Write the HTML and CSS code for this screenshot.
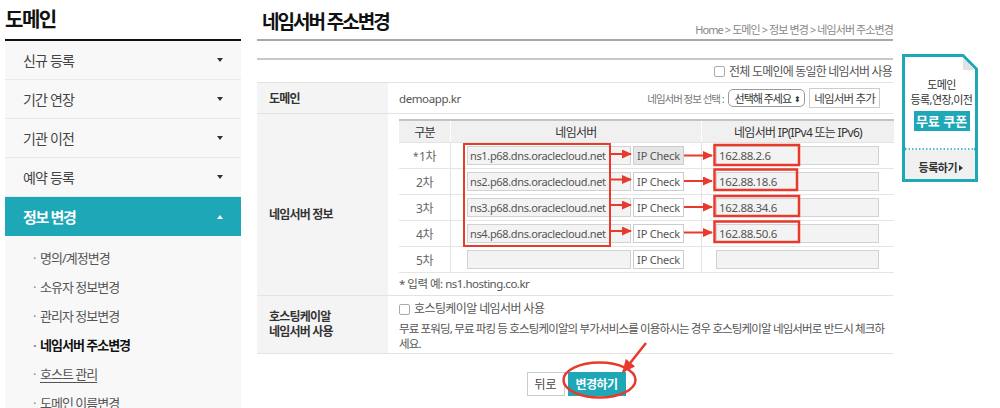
FILE: index.html
```html
<!DOCTYPE html>
<html lang="ko">
<head>
<meta charset="utf-8">
<title>네임서버 주소변경</title>
<link rel="stylesheet" href="styles.css">
</head>
<body>
<div class="page">
  <aside class="side">
    <h2 class="side-title">도메인</h2>
    <ul class="menu">
      <li class="menu-item"><span>신규 등록</span><i class="caret"></i></li>
      <li class="menu-item"><span>기간 연장</span><i class="caret"></i></li>
      <li class="menu-item"><span>기관 이전</span><i class="caret"></i></li>
      <li class="menu-item"><span>예약 등록</span><i class="caret"></i></li>
      <li class="menu-item active"><span>정보 변경</span><i class="caret up"></i></li>
    </ul>
    <ul class="sub">
      <li>명의/계정변경</li>
      <li>소유자 정보변경</li>
      <li>관리자 정보변경</li>
      <li class="on">네임서버 주소변경</li>
      <li class="ul">호스트 관리</li>
      <li>도메인 이름변경</li>
    </ul>
  </aside>

  <main class="main">
    <div class="head">
      <h1 class="title">네임서버 주소변경</h1>
      <div class="crumb">Home &gt; 도메인 &gt; 정보 변경 &gt; 네임서버 주소변경</div>
    </div>

    <div class="form">
      <div class="form-top">
        <label class="chk"><span class="box"></span>전체 도메인에 동일한 네임서버 사용</label>
      </div>

      <div class="row r-domain">
        <div class="th">도메인</div>
        <div class="td">
          <span class="domain">demoapp.kr</span>
          <div class="pick">
            <span class="pick-label">네임서버 정보 선택 :</span>
            <span class="select">선택해 주세요 <b class="updown">⬍</b></span>
            <button class="btn add">네임서버 추가</button>
          </div>
        </div>
      </div>

      <div class="row r-ns">
        <div class="th">네임서버 정보</div>
        <div class="td">
          <div class="ns">
            <div class="ns-head">
              <div class="c1">구분</div>
              <div class="c2">네임서버</div>
              <div class="c3">네임서버 IP(IPv4 또는 IPv6)</div>
            </div>
            <div class="ns-row">
              <div class="c1"><span class="req">*</span>1차</div>
              <div class="c2"><input class="inp ns-inp" value="ns1.p68.dns.oraclecloud.net" readonly><button class="btn chkbtn pressed">IP Check</button></div>
              <div class="c3"><input class="inp ip-inp" value="162.88.2.6" readonly></div>
            </div>
            <div class="ns-row">
              <div class="c1">2차</div>
              <div class="c2"><input class="inp ns-inp" value="ns2.p68.dns.oraclecloud.net" readonly><button class="btn chkbtn">IP Check</button></div>
              <div class="c3"><input class="inp ip-inp" value="162.88.18.6" readonly></div>
            </div>
            <div class="ns-row">
              <div class="c1">3차</div>
              <div class="c2"><input class="inp ns-inp" value="ns3.p68.dns.oraclecloud.net" readonly><button class="btn chkbtn">IP Check</button></div>
              <div class="c3"><input class="inp ip-inp" value="162.88.34.6" readonly></div>
            </div>
            <div class="ns-row">
              <div class="c1">4차</div>
              <div class="c2"><input class="inp ns-inp" value="ns4.p68.dns.oraclecloud.net" readonly><button class="btn chkbtn">IP Check</button></div>
              <div class="c3"><input class="inp ip-inp" value="162.88.50.6" readonly></div>
            </div>
            <div class="ns-row">
              <div class="c1">5차</div>
              <div class="c2"><input class="inp ns-inp" value="" readonly><button class="btn chkbtn">IP Check</button></div>
              <div class="c3"><input class="inp ip-inp" value="" readonly></div>
            </div>
          </div>
          <p class="note">* 입력 예: ns1.hosting.co.kr</p>
        </div>
      </div>

      <div class="row r-host">
        <div class="th">호스팅케이알<br>네임서버 사용</div>
        <div class="td">
          <label class="chk"><span class="box"></span>호스팅케이알 네임서버 사용</label>
          <p class="desc">무료 포워딩, 무료 파킹 등 호스팅케이알의 부가서비스를 이용하시는 경우 호스팅케이알 네임서버로 반드시 체크하세요.</p>
        </div>
      </div>
    </div>

    <div class="actions">
      <button class="btn back">뒤로</button>
      <button class="btn primary">변경하기</button>
    </div>
  </main>

  <aside class="banner">
    <svg class="banner-frame" width="76" height="128" viewBox="0 0 76 128">
      <path d="M1.5 1.5 H61 L74.5 15 V126.5 H1.5 Z" fill="#fff" stroke="#1ea8b7" stroke-width="3"/>
      <polygon points="61,3.5 61,16 72.5,16" fill="#e2e2e2"/>
      <rect x="3" y="96" width="70" height="29" fill="#f0f0f0"/>
      <line x1="3" y1="95" x2="73" y2="95" stroke="#1ea8b7" stroke-width="1.5" stroke-dasharray="1.5 2"/>
      <circle cx="2" cy="95" r="2" fill="#1ea8b7"/>
      <circle cx="74" cy="95" r="2" fill="#1ea8b7"/>
    </svg>
    <div class="banner-body">
      <div class="b-line">도메인</div>
      <div class="b-line">등록,연장,이전</div>
      <div class="b-coupon">무료 쿠폰</div>
    </div>
    <div class="banner-foot">등록하기 <span class="tri"></span></div>
  </aside>

  <svg class="marks" width="1000" height="408" viewBox="0 0 1000 408">
    <defs>
      <marker id="ah" markerWidth="10" markerHeight="9" refX="9" refY="4.5" orient="auto" markerUnits="userSpaceOnUse">
        <path d="M0 0 L10 4.5 L0 9 Z" fill="#e8392d"/>
      </marker>
      <marker id="ah2" markerWidth="13" markerHeight="12" refX="12" refY="6" orient="auto" markerUnits="userSpaceOnUse">
        <path d="M0 0 L13 6 L0 12 Z" fill="#e8392d"/>
      </marker>
    </defs>
    <g fill="none" stroke="#e8392d" stroke-width="2">
      <rect x="464" y="144" width="146" height="102"/>
      <line x1="610" y1="154" x2="631" y2="154" marker-end="url(#ah)"/>
      <line x1="610" y1="179.5" x2="631" y2="179.5" marker-end="url(#ah)"/>
      <line x1="610" y1="205" x2="631" y2="205" marker-end="url(#ah)"/>
      <line x1="610" y1="231" x2="631" y2="231" marker-end="url(#ah)"/>
      <line x1="684" y1="155.5" x2="712" y2="155.5" marker-end="url(#ah)"/>
      <line x1="684" y1="181" x2="712" y2="181" marker-end="url(#ah)"/>
      <line x1="684" y1="207" x2="712" y2="207" marker-end="url(#ah)"/>
      <line x1="684" y1="232.5" x2="712" y2="232.5" marker-end="url(#ah)"/>
    </g>
    <g fill="none" stroke="#e8392d" stroke-width="2.5">
      <rect x="714.5" y="145" width="84.5" height="20"/>
      <rect x="714.5" y="169.5" width="82.5" height="20.5"/>
      <rect x="714.5" y="196" width="84.5" height="20"/>
      <rect x="714.5" y="221.5" width="84.5" height="20.5"/>
      <ellipse cx="599.5" cy="380" rx="36" ry="17.5"/>
      <line x1="646" y1="343" x2="623" y2="372" marker-end="url(#ah2)"/>
    </g>
  </svg>
</div>
</body>
</html>
```

FILE: styles.css
```css
* { box-sizing: border-box; }

body {
  margin: 0;
  background: #fff;
  color: #333;
  font-family: "Noto Sans", "Noto Sans CJK KR", sans-serif;
  font-size: 12px;
}

.page {
  position: relative;
  display: flex;
  align-items: flex-start;
  width: 1000px;
  height: 408px;
  padding-left: 5px;
  overflow: hidden;
}

/* ---------- sidebar ---------- */
.side {
  flex: none;
  width: 236px;
  background: #f8f8f8;
  min-height: 420px;
}

.side-title {
  margin: 0;
  height: 41px;
  line-height: 40px;
  font-size: 20px;
  font-weight: 700;
  color: #111;
  letter-spacing: -1.5px;
  background: #fff;
  border-bottom: 2px solid #111;
}

.menu {
  list-style: none;
  margin: 0;
  padding: 0;
}

.menu-item {
  display: flex;
  align-items: center;
  justify-content: space-between;
  height: 39px;
  padding: 0 18px;
  border-bottom: 1px solid #e9e9e9;
  font-size: 14px;
  color: #444;
  letter-spacing: -0.8px;
}

.caret {
  width: 0;
  height: 0;
  border-left: 3.5px solid transparent;
  border-right: 3.5px solid transparent;
  border-top: 4px solid #333;
}

.caret.up {
  border-top: 0;
  border-bottom: 4px solid #fff;
}

.menu-item.active {
  background: #1ea8b7;
  color: #fff;
  font-weight: 700;
  font-size: 15px;
  letter-spacing: -1.3px;
  border-bottom: 0;
}

.sub {
  list-style: none;
  margin: 0;
  padding: 8px 0 0 28px;
}

.sub li {
  height: 29px;
  line-height: 29px;
  font-size: 13px;
  color: #555;
  letter-spacing: -1px;
}

.sub li::before {
  content: "·";
  display: inline-block;
  width: 7px;
  color: #888;
}

.sub li.on {
  color: #111;
  font-weight: 700;
}

.sub li.ul {
  text-decoration: underline;
  text-underline-offset: 3px;
}

/* ---------- main ---------- */
.main {
  flex: none;
  width: 636px;
  margin-left: 16px;
}

.head {
  display: flex;
  justify-content: space-between;
  align-items: flex-end;
  height: 41px;
  padding-left: 5px;
  border-bottom: 2px solid #a8a8a8;
}

.title {
  margin: 0 0 5px;
  font-size: 19px;
  line-height: 24px;
  font-weight: 700;
  color: #111;
  letter-spacing: -2px;
}

.crumb {
  margin-bottom: 2px;
  font-size: 11px;
  line-height: 14px;
  color: #888;
  letter-spacing: -0.9px;
}

.form {
  margin-top: 17px;
  border-top: 2px solid #c8c8c8;
}

.form-top {
  display: flex;
  justify-content: flex-end;
  align-items: center;
  height: 23px;
  border-bottom: 1px solid #e3e3e3;
  padding-right: 1px;
  color: #555;
  letter-spacing: -0.8px;
}

.chk {
  display: inline-flex;
  align-items: center;
}

.box {
  display: inline-block;
  width: 11px;
  height: 11px;
  margin-right: 4px;
  border: 1px solid #aaa;
  border-radius: 2px;
  background: #fff;
}

.row {
  display: flex;
  border-bottom: 1px solid #e3e3e3;
}

.th {
  flex: none;
  display: flex;
  align-items: center;
  width: 131px;
  padding-left: 12px;
  background: #f4f4f4;
  font-weight: 700;
  color: #333;
  letter-spacing: -0.8px;
}

.td {
  flex: 1;
  padding-left: 11px;
  color: #555;
}

.r-domain .td {
  display: flex;
  align-items: center;
  justify-content: space-between;
  height: 30px;
  padding-right: 13px;
}

.domain {
  font-size: 11.5px;
  letter-spacing: -0.4px;
  color: #555;
}

.pick {
  display: flex;
  align-items: center;
}

.pick-label {
  font-size: 10.5px;
  color: #777;
  letter-spacing: -1px;
  margin-right: 4px;
}

.select {
  display: inline-flex;
  align-items: center;
  height: 18px;
  padding: 0 4px 0 6px;
  border: 1px solid #999;
  border-radius: 5px;
  font-size: 11px;
  color: #333;
  letter-spacing: -1px;
}

.updown {
  font-size: 8px;
  margin-left: 3px;
  font-weight: 400;
}

.btn {
  font: inherit;
  margin: 0;
  background: #fff;
  border: 1px solid #ccc;
  color: #555;
  padding: 0;
  cursor: pointer;
}

.add {
  height: 20px;
  margin-left: 4px;
  padding: 0 4px;
  font-size: 11.5px;
  letter-spacing: -0.8px;
  color: #444;
}

/* nameserver table */
.r-ns .th {
  padding-top: 18px;
}

.r-ns .td {
  padding-top: 5px;
  padding-right: 0;
}

.ns {
  width: 495px;
}

.ns-head {
  display: flex;
  height: 24px;
  border-top: 2px solid #c4c4c4;
  border-bottom: 1px solid #e3e3e3;
  background: #f0f0f0;
  color: #333;
  letter-spacing: -0.7px;
}

.ns-row {
  display: flex;
  height: 26px;
  border-bottom: 1px solid #e5e5e5;
}

.c1, .c2, .c3 {
  display: flex;
  align-items: center;
}

.c1 {
  width: 51px;
  justify-content: center;
}

.c2 {
  width: 251px;
  border-left: 1px solid #e3e3e3;
}

.c3 {
  flex: 1;
  border-left: 1px solid #e3e3e3;
}

.ns-head .c2, .ns-head .c3 {
  justify-content: center;
  border-left-color: #fff;
}

.ns-row .c1 {
  color: #666;
  letter-spacing: -0.5px;
}

.req {
  font-size: 10px;
  margin-right: 1px;
}

.ns-row .c2 {
  padding-left: 16px;
}

.ns-row .c3 {
  padding-left: 14px;
}

.inp {
  height: 19px;
  padding: 0 2px;
  border: 1px solid #d2d2d2;
  background: #f3f3f3;
  font: inherit;
  font-size: 11px;
  letter-spacing: -0.35px;
  color: #555;
  outline: none;
}

.ns-inp {
  width: 164px;
}

.ip-inp {
  width: 163px;
  font-size: 11.5px;
}

.chkbtn {
  width: 51px;
  height: 19px;
  margin-left: 2px;
  font-size: 11px;
  letter-spacing: -0.2px;
  color: #555;
}

.chkbtn.pressed {
  background: #e6e6e6;
}

.note {
  margin: 0;
  height: 22px;
  line-height: 22px;
  font-size: 11.5px;
  letter-spacing: -0.5px;
  color: #555;
}

/* hosting row */
.r-host .th {
  line-height: 15px;
}

.r-host .td {
  padding-top: 5px;
  padding-right: 0;
  min-height: 55px;
}

.r-host .chk {
  line-height: 16px;
  letter-spacing: -0.6px;
}

.desc {
  margin: 2px 0 2px;
  line-height: 15px;
  letter-spacing: -0.85px;
  font-size: 11.5px;
}

.actions {
  display: flex;
  justify-content: center;
  gap: 3px;
  margin-top: 18px;
  padding-left: 2px;
}

.back {
  width: 38px;
  height: 24px;
  color: #444;
}

.primary {
  width: 58px;
  height: 24px;
  background: #1ea8b7;
  border-color: #1ea8b7;
  color: #fff;
  font-weight: 700;
  letter-spacing: -0.6px;
}

/* ---------- banner ---------- */
.banner {
  position: relative;
  flex: none;
  width: 76px;
  height: 128px;
  margin: 54px 0 0 9px;
}

.banner-frame {
  position: absolute;
  left: 0;
  top: 0;
}

.banner-body {
  position: relative;
  padding: 23px 0 0 3px;
  text-align: center;
}

.b-line {
  font-size: 11px;
  line-height: 15px;
  color: #333;
  letter-spacing: -0.6px;
}

.b-coupon {
  width: 56px;
  height: 20px;
  margin: 4px auto 0;
  background: #1ea8b7;
  color: #fff;
  font-size: 13px;
  font-weight: 700;
  line-height: 20px;
  letter-spacing: 0;
}

.banner-foot {
  position: relative;
  margin-top: 28px;
  text-align: center;
  font-size: 11px;
  font-weight: 700;
  color: #333;
  letter-spacing: -0.5px;
  padding-left: 2px;
}

.tri {
  display: inline-block;
  width: 0;
  height: 0;
  border-top: 3px solid transparent;
  border-bottom: 3px solid transparent;
  border-left: 4px solid #333;
  vertical-align: 1px;
}

/* ---------- annotations ---------- */
.marks {
  position: absolute;
  left: 0;
  top: 0;
  pointer-events: none;
}
```
